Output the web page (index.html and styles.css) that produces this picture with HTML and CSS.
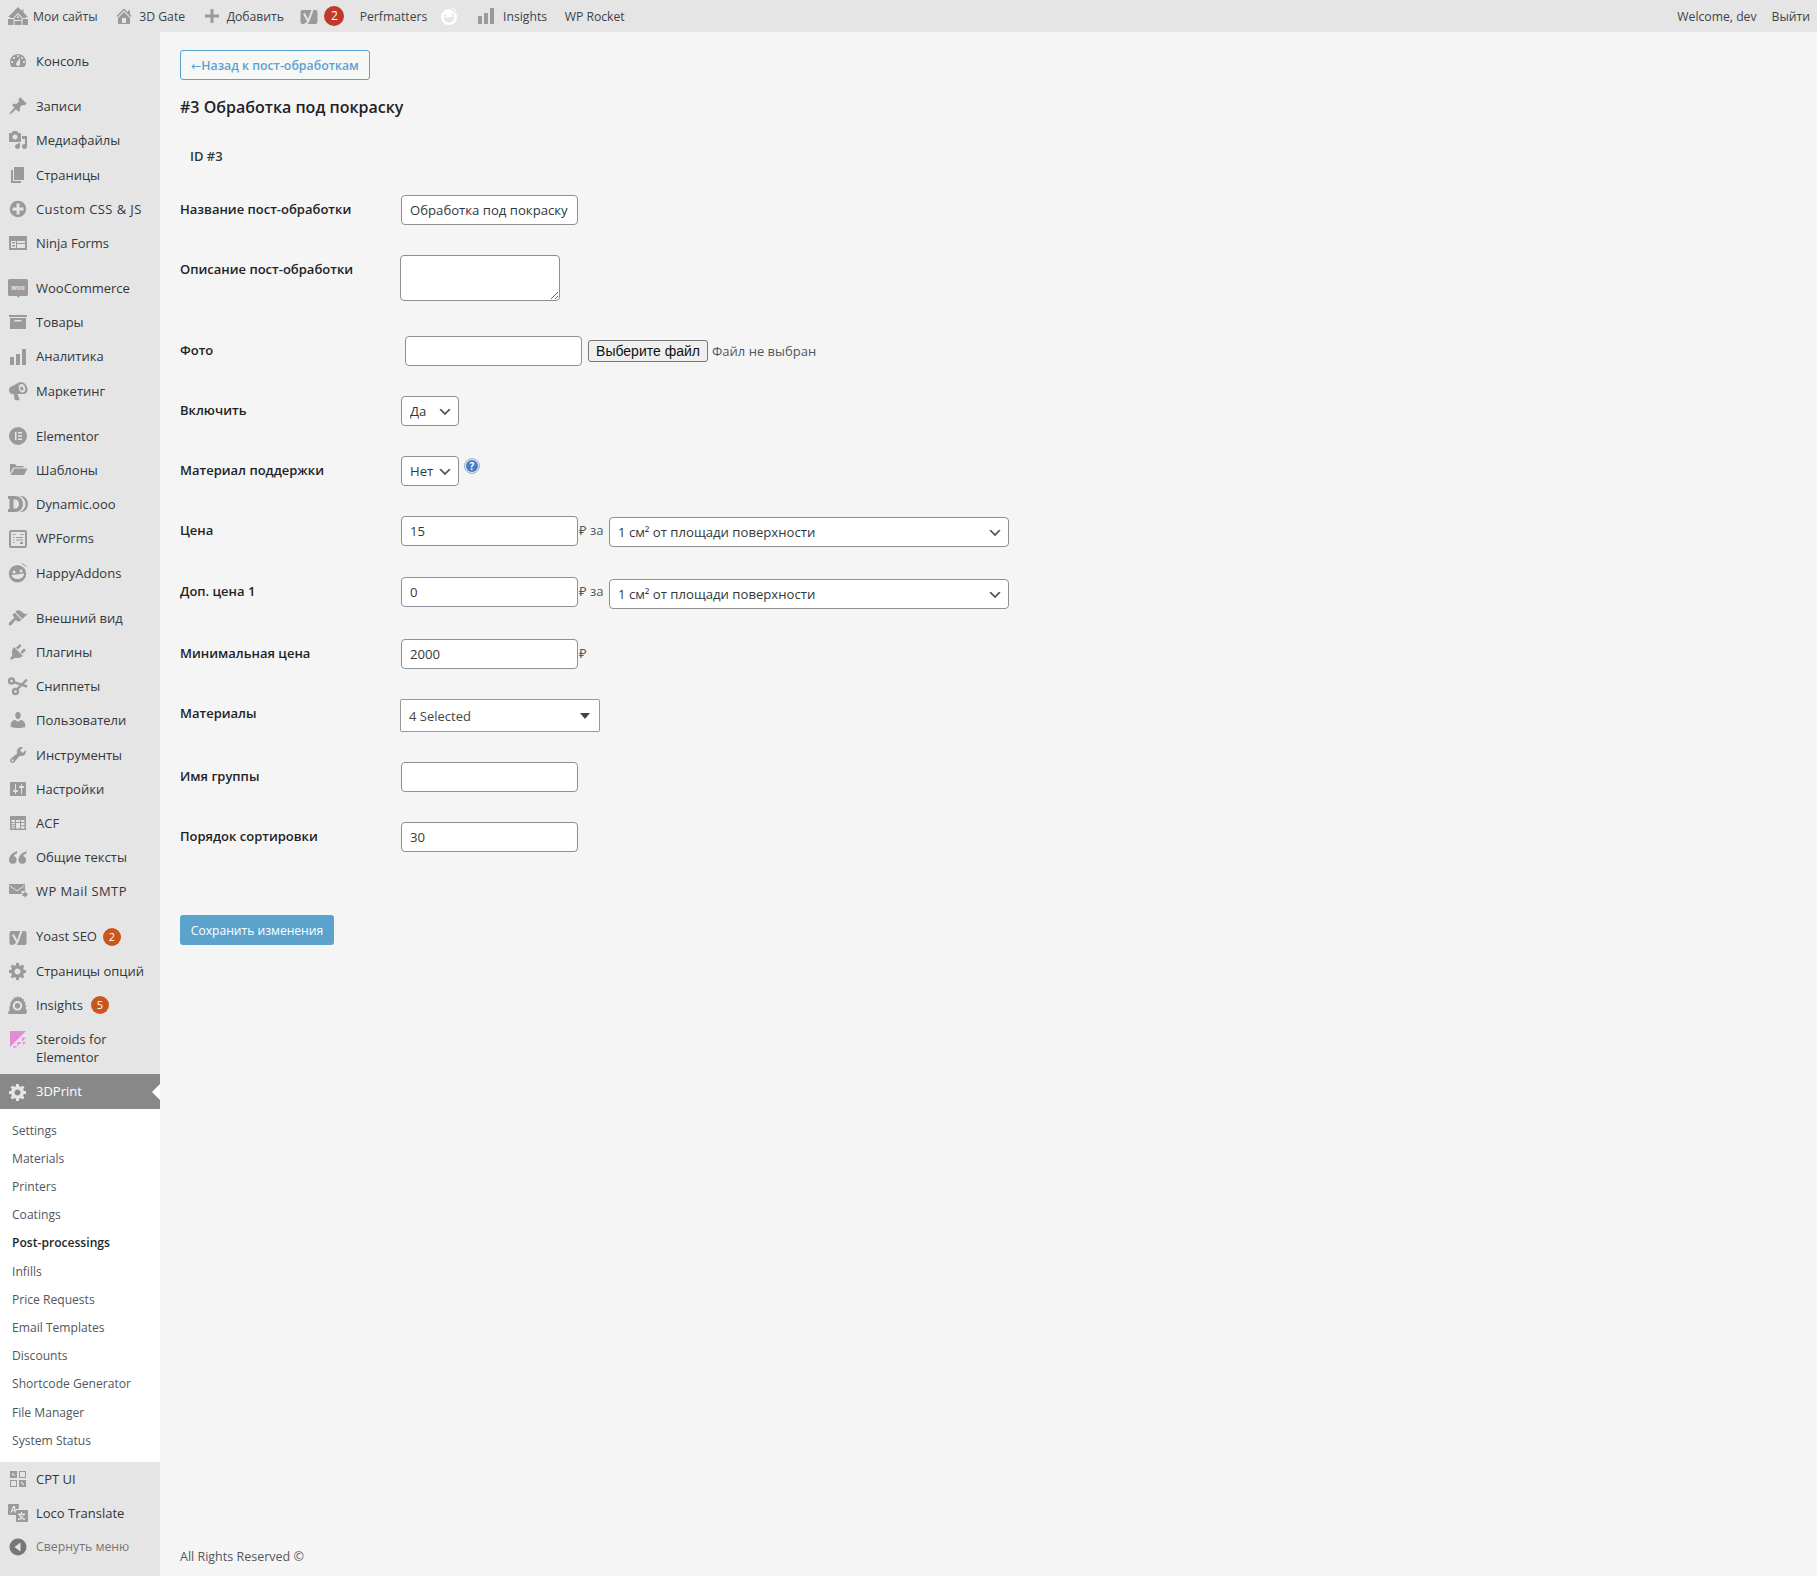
FILE: index.html
```html
<!DOCTYPE html>
<html lang="ru">
<head>
<meta charset="utf-8">
<title>3DPrint</title>
<link rel="stylesheet" href="styles.css">
</head>
<body>
<header class="adminbar">
  <nav class="bar-left">
    <a class="bar-item first"><svg class="bar-ico" viewBox="0 0 20 20"><path d="M10 1l4 4V3.500h1.500V6.500L20 11h-2v1h-3.500l-1-1H14L10 7l-4 4h.5l-1 1H2v-1H0zM10 8.500l3.500 3.500v2H6.500v-2zM9 10.500v1.500h2v-1.500zM5.500 13v6H0v-6zM20 13v6h-5.500v-6zM13.500 15v4h-7v-4z" fill-rule="evenodd"/></svg>Мои сайты</a>
    <a class="bar-item"><svg class="bar-ico" viewBox="0 0 20 20"><path d="M16 8.500l1.530 1.530-1.060 1.060L10 4.620l-6.470 6.470-1.060-1.060L10 2.500l4 4v-2h2v4zm-6-2.460l6 5.990V18H4v-5.970zM12 17v-5H8v5h4z" fill-rule="evenodd"/></svg>3D Gate</a>
    <a class="bar-item add"><svg class="bar-ico" viewBox="0 0 20 20"><path d="M17 8.500v3h-5.500V17h-3v-5.500H3v-3h5.500V3h3v5.500z"/></svg>Добавить</a>
    <a class="bar-item yoast"><svg class="bar-ico" viewBox="0 0 20 20"><path d="M3.500 4h13a2 2 0 0 1 2 2v10a2 2 0 0 1-2 2h-13a2 2 0 0 1-2-2V6a2 2 0 0 1 2-2z"/><path class="knock" d="M5 7.500l3.700 7M14.500 1L9.500 15c-.7 2-2 3-4 3.500"/></svg><span class="bar-badge">2</span></a>
    <a class="bar-item perf">Perfmatters</a>
    <a class="bar-item smile"><svg class="bar-ico white" viewBox="0 0 20 20"><path d="M10 3a8 8 0 1 0 8 8 7 7 0 0 0-.6-3L15 6a7 7 0 0 0-5-3zM6 8.500a1.300 1.300 0 1 1 0 2.600 1.300 1.300 0 0 1 0-2.600zm8-1a1.300 1.300 0 1 1 0 2.600 1.300 1.300 0 0 1 0-2.600zM4.500 12l11-1.500c0 3-2 6-5.500 6-3 0-5-2-5.500-4.500zM13 1l4 3.500-.7.700L12.500 2z" fill-rule="evenodd"/></svg></a>
    <a class="bar-item ins"><svg class="bar-ico" viewBox="0 0 20 20"><path d="M18 18V2h-4v16h4zm-6 0V7H8v11h4zm-6 0v-8H2v8h4z"/></svg>Insights</a>
    <a class="bar-item">WP Rocket</a>
  </nav>
  <nav class="bar-right">
    <a class="bar-link">Welcome, dev</a>
    <a class="bar-link">Выйти</a>
  </nav>
</header>

<div class="shell">
  <aside class="sidebar">
    <ul class="menu">
      <li class="mi"><svg class="ico" viewBox="0 0 20 20"><path fill-rule="evenodd" d="M3.760 16h12.480c1.100-1.370 1.760-3.110 1.760-5 0-4.420-3.580-8-8-8s-8 3.580-8 8c0 1.890.66 3.630 1.760 5zM10 4c.55 0 1 .45 1 1s-.45 1-1 1-1-.45-1-1 .45-1 1-1zM6 6c.55 0 1 .45 1 1s-.45 1-1 1-1-.45-1-1 .45-1 1-1zm8 0c.55 0 1 .45 1 1s-.45 1-1 1-1-.45-1-1 .45-1 1-1zm-5.370 5.550L12 7v6c0 1.100-.9 2-2 2s-2-.9-2-2c0-.57.24-1.080.63-1.450zM4 10c.55 0 1 .45 1 1s-.45 1-1 1-1-.45-1-1 .45-1 1-1zm12 0c.55 0 1 .45 1 1s-.45 1-1 1-1-.45-1-1 .45-1 1-1z"/></svg>Консоль</li>
      <li class="sep"></li>
      <li class="mi"><svg class="ico" viewBox="0 0 20 20"><path d="M10.440 3.020l1.820-1.820 6.360 6.350-1.830 1.820c-1.050-.68-2.480-.57-3.410.36l-.75.75c-.92.93-1.040 2.350-.35 3.410l-1.830 1.820-2.410-2.410-2.800 2.790c-.42.42-3.380 2.710-3.800 2.290s1.860-3.390 2.280-3.810l2.790-2.790L4.100 9.360l1.830-1.820c1.050.69 2.480.57 3.400-.36l.75-.75c.93-.92 1.050-2.350.36-3.410z"/></svg>Записи</li>
      <li class="mi"><svg class="ico" viewBox="0 0 20 20"><path fill-rule="evenodd" d="M13 11V4c0-.55-.45-1-1-1h-1.670L9 1H5L3.670 3H2c-.55 0-1 .45-1 1v7c0 .55.45 1 1 1h10c.55 0 1-.45 1-1zM7 4.500c1.380 0 2.500 1.120 2.500 2.500S8.380 9.500 7 9.500 4.500 8.380 4.500 7 5.620 4.500 7 4.500zM14 6h5v10.500c0 1.380-1.120 2.500-2.500 2.500S14 17.880 14 16.500s1.120-2.500 2.500-2.500c.17 0 .34.020.5.050V9h-3V6zm-4 8.050V13h2v3.500c0 1.380-1.120 2.500-2.500 2.500S7 17.880 7 16.500 8.120 14 9.500 14c.17 0 .34.020.5.050z"/></svg>Медиафайлы</li>
      <li class="mi"><svg class="ico" viewBox="0 0 20 20"><path d="M6 15V2h10v13H6zm-1 1h8v2H3V5h2v11z"/></svg>Страницы</li>
      <li class="mi"><svg class="ico" viewBox="0 0 20 20"><path fill-rule="evenodd" d="M15.800 4.200c3.200 3.210 3.200 8.390 0 11.600-3.210 3.200-8.390 3.200-11.600 0C1 12.590 1 7.410 4.200 4.200 7.410 1 12.590 1 15.800 4.200zm-4.300 11.300v-4h4v-3h-4v-4h-3v4h-4v3h4v4h3z"/></svg><span class="ls">Custom CSS &amp; JS</span></li>
      <li class="mi"><svg class="ico" viewBox="0 0 20 20"><path fill-rule="evenodd" d="M1 3h18v14H1zM3 8v7h5V8zm6 0v2h8V8zm0 3v4h8v-4zM4 9h3v1.500H4zm0 3h3v1.500H4z"/></svg>Ninja Forms</li>
      <li class="sep"></li>
      <li class="mi"><svg class="ico" viewBox="0 0 20 20"><path d="M1.500 1h17A1.500 1.500 0 0 1 20 2.500v14a1.500 1.500 0 0 1-1.500 1.500H12l-2 2-1-2H1.500A1.500 1.500 0 0 1 0 16.500v-14A1.500 1.500 0 0 1 1.500 1z"/><text class="woo-text" x="10" y="12" text-anchor="middle">woo</text></svg>WooCommerce</li>
      <li class="mi"><svg class="ico" viewBox="0 0 20 20"><path fill-rule="evenodd" d="M1 3h18v2H1zM2 6h16v11H2zM6.500 8v1.500h7V8z"/></svg>Товары</li>
      <li class="mi"><svg class="ico" viewBox="0 0 20 20"><path d="M18 18V2h-4v16h4zm-6 0V7H8v11h4zm-6 0v-8H2v8h4z"/></svg>Аналитика</li>
      <li class="mi"><svg class="ico" viewBox="0 0 20 20"><path fill-rule="evenodd" d="M13 1c3 0 6 3 6.500 6.500.4 3-1 5.500-4 5.500H9.500l2 5.500c0 .5-.3.700-.6.700H7.400c-.4 0-.7-.3-.8-.7L5.600 13H4.300C2.500 13 1 11 1 9c0-1.500.7-2.700 2-3.300L11 1.500c.6-.3 1.300-.5 2-.5zm.5 2c-2 0-3 1.800-2.700 4.300.3 2.500 2 4.200 3.700 4.200 2 0 3-1.800 2.700-4.300C17 4.800 15.300 3 13.500 3zm-.1 2.500c.9 0 1.800 1 2 2.100.2 1.100-.3 2-1.200 2s-1.800-1-2-2.100c-.2-1.100.3-2 1.200-2z"/></svg>Маркетинг</li>
      <li class="sep"></li>
      <li class="mi"><svg class="ico" viewBox="0 0 20 20"><path fill-rule="evenodd" d="M10 1a9 9 0 1 1 0 18 9 9 0 0 1 0-18zM7 6v8h1.500V6zm3 0v1.500h4V6zm0 3.200v1.500h4V9.200zm0 3.300V14h4v-1.500z"/></svg>Elementor</li>
      <li class="mi"><svg class="ico" viewBox="0 0 20 20"><path d="M2 4h5l1.500 2H15.500v1.500H5.500L2 13.500V4zM6.500 8.500H19.500L16 15H2.500z"/></svg>Шаблоны</li>
      <li class="mi"><svg class="ico" viewBox="0 0 20 20"><path fill-rule="evenodd" d="M0 2h7c5 0 8 3.500 8 8s-3 8-8 8H0V15h1.500V5H0zM5.500 5.500v9H7c2.800 0 4-2 4-4.500S9.800 5.500 7 5.500zM12 2h1c4 0 7 3.500 7 8s-3 8-7 8h-1c3.200-1.500 5.500-4.500 5.500-8S15.200 3.500 12 2z"/></svg>Dynamic.ooo</li>
      <li class="mi"><svg class="ico" viewBox="0 0 20 20"><path fill-rule="evenodd" d="M3 1h14a2 2 0 0 1 2 2v14a2 2 0 0 1-2 2H3a2 2 0 0 1-2-2V3a2 2 0 0 1 2-2zm0 2v14h14V3zM4.500 5h3v1h-3zm8 0h3v1h-3zM5 8h1.500v1H5zm3 0h7v1H8zM5 10.500h1.500v1H5zm3 0h7v1H8zM5 13h1.500v1H5zm7 0h3v2h-3z"/></svg>WPForms</li>
      <li class="mi"><svg class="ico" viewBox="0 0 20 20"><path fill-rule="evenodd" d="M9.500 2A8.700 8.700 0 1 1 9.500 19.500 8.700 8.700 0 0 1 9.500 2zM6 7.500a1.500 1.500 0 1 0 0 3 1.500 1.500 0 0 0 0-3zm7 -1a1.500 1.500 0 1 0 0 3 1.500 1.500 0 0 0 0-3zM3.500 12l12.500-1.500c0 3-2.500 5.500-6 5.500-3.500 0-6-1.500-6.500-4zM14 0l5 3.500-.4.6L13.500.7z"/></svg>HappyAddons</li>
      <li class="sep"></li>
      <li class="mi"><svg class="ico" viewBox="0 0 20 20"><path d="M14.480 11.060L7.410 3.990l1.500-1.500c.5-.56 2.300-.47 3.510.32 1.210.8 1.430 1.280 2.910 2.100 1.180.64 2.450 1.260 4.450.85zm-.71.71L6.700 4.700 4.930 6.470c-.39.39-.39 1.020 0 1.410l1.060 1.060c.39.39.39 1.030 0 1.420-.6.6-1.430 1.110-2.210 1.690-.35.26-.7.53-1.010.84C1.430 13.710.07 16.170 1.200 17.300c1.130 1.130 3.090-1.230 3.430-1.570.3-.3.57-.65.84-1 .58-.78 1.100-1.600 1.700-2.200.39-.39 1.020-.39 1.410 0l1.060 1.060c.39.39 1.020.39 1.410 0z"/></svg>Внешний вид</li>
      <li class="mi"><svg class="ico" viewBox="0 0 20 20"><path d="M13.110 4.360L9.870 7.600 8 5.730l3.240-3.240c.35-.34 1.050-.2 1.560.32.52.51.66 1.210.31 1.550zm-8 1.770l.91-1.120 9.010 9.010-1.190.84c-.71.71-2.630 1.160-3.820 1.160H6.140L4.900 17.260c-.59.59-1.540.59-2.120 0-.59-.58-.59-1.530 0-2.120l1.240-1.240v-3.880c0-1.130.4-3.190 1.090-3.890zm7.260 3.970l3.240-3.240c.34-.35 1.040-.21 1.550.31.52.51.66 1.210.31 1.550l-3.240 3.250z"/></svg>Плагины</li>
      <li class="mi"><svg class="ico" viewBox="0 0 20 20"><circle class="line" cx="3.500" cy="5" r="2.500"/><circle class="line" cx="7.500" cy="15.500" r="2.500"/><path class="line" d="M5.800 6.200L19 10.500M9 13.400L19 3.500"/></svg>Сниппеты</li>
      <li class="mi"><svg class="ico" viewBox="0 0 20 20"><path d="M10 9.250c-2.270 0-2.730-3.440-2.730-3.440C7 4.020 7.820 2 9.970 2c2.160 0 2.980 2.020 2.710 3.810 0 0-.41 3.440-2.680 3.440zm0 2.570L12.720 10c2.390 0 4.520 2.330 4.520 4.530v2.490s-3.650 1.130-7.240 1.130c-3.650 0-7.240-1.130-7.240-1.130v-2.490c0-2.250 1.940-4.480 4.470-4.480z"/></svg>Пользователи</li>
      <li class="mi"><svg class="ico" viewBox="0 0 20 20"><path fill-rule="evenodd" d="M16.680 9.770c-1.340 1.340-3.300 1.670-4.950.99l-5.410 6.520c-.99.99-2.590.99-3.580 0s-.99-2.590 0-3.570l6.520-5.420c-.68-1.650-.35-3.610.99-4.950 1.280-1.280 3.120-1.620 4.720-1.060l-2.890 2.890 2.820 2.820 2.860-2.870c.53 1.580.18 3.390-1.080 4.650zM3.810 16.210c.4.39 1.040.39 1.430 0 .4-.4.4-1.040 0-1.430-.39-.4-1.030-.4-1.430 0-.39.39-.39 1.030 0 1.430z"/></svg>Инструменты</li>
      <li class="mi"><svg class="ico" viewBox="0 0 20 20"><path fill-rule="evenodd" d="M18 16V4c0-.55-.45-1-1-1H3c-.55 0-1 .45-1 1v12c0 .55.45 1 1 1h14c.55 0 1-.45 1-1zM8 11h1c.55 0 1 .45 1 1s-.45 1-1 1H8v1.500c0 .28-.22.5-.5.5s-.5-.22-.5-.5V13H6c-.55 0-1-.45-1-1s.45-1 1-1h1V5.500c0-.28.22-.5.5-.5s.5.22.5.5V11zm5-2h-1c-.55 0-1-.45-1-1s.45-1 1-1h1V5.500c0-.28.22-.5.5-.5s.5.22.5.5V7h1c.55 0 1 .45 1 1s-.45 1-1 1h-1v5.500c0 .28-.22.5-.5.5s-.5-.22-.5-.5V9z"/></svg>Настройки</li>
      <li class="mi"><svg class="ico" viewBox="0 0 20 20"><path fill-rule="evenodd" d="M2 3h16v14H2zM3.500 7v2h3.500V7zm4.500 0v2h4V7zm5 0v2h3.500V7zM3.500 10v1.200h3.500V10zm0 2.200v1.200h3.500v-1.200zm0 2.200v1.200h3.500v-1.200zM8 10v5.600h4V10zm5 0v2.300h3.500V10zm0 3.300v2.300h3.500v-2.300z"/></svg>ACF</li>
      <li class="mi"><svg class="ico" viewBox="0 0 20 20"><path d="M9 4C5 5.500 1 8.500 1 13a3.800 3.800 0 1 0 4.700-3.700C6 8 7.500 6.800 9 6.500zM18.500 4c-4 1.500-8 4.500-8 9a3.800 3.800 0 1 0 4.700-3.700c.3-1.300 1.800-2.500 3.300-2.800z"/></svg>Общие тексты</li>
      <li class="mi"><svg class="ico" viewBox="0 0 20 20"><path d="M1 3h16v7h-3.500v3H1z"/><path class="knock thin" d="M1.500 4.500L9 10l7.500-5.500"/><path d="M14.500 12h2V10l3.500 3.500L16.500 17v-2h-2z"/></svg><span class="ls">WP Mail SMTP</span></li>
      <li class="sep"></li>
      <li class="mi"><svg class="ico" viewBox="0 0 20 20"><path d="M3.500 4h13a2 2 0 0 1 2 2v10a2 2 0 0 1-2 2h-13a2 2 0 0 1-2-2V6a2 2 0 0 1 2-2z"/><path class="knock" d="M5 7.500l3.700 7M14.500 1L9.500 15c-.7 2-2 3-4 3.500"/></svg>Yoast SEO<span class="count wide">2</span></li>
      <li class="mi"><svg class="ico" viewBox="0 0 20 20"><path fill-rule="evenodd" d="M18 12h-2.180c-.17.7-.44 1.350-.81 1.930l1.540 1.540-2.100 2.100-1.540-1.540c-.58.36-1.230.63-1.910.79V19H8v-2.180c-.68-.16-1.330-.43-1.910-.79l-1.540 1.540-2.120-2.120 1.540-1.540c-.36-.58-.63-1.230-.79-1.910H1V9.030h2.170c.16-.7.44-1.350.8-1.940L2.430 5.550l2.100-2.100 1.540 1.540c.58-.37 1.240-.64 1.930-.81V2h3v2.180c.68.16 1.330.43 1.910.79l1.540-1.540 2.120 2.120-1.540 1.540c.36.59.64 1.240.8 1.940H18V12zm-8.500 1.500c1.660 0 3-1.340 3-3s-1.340-3-3-3-3 1.340-3 3 1.340 3 3 3z"/></svg>Страницы опций</li>
      <li class="mi"><svg class="ico" viewBox="0 0 20 20"><path fill-rule="evenodd" d="M9.500 1l1.500 1.500 2-.5.800 1.800 2 .4v2l1.700 1.200-.5 1.800 1.500 2-1 1.300L19 16l-1 3H0l.7-3 1-1.500L1.300 12 2.500 10 2 8l1.700-1.200L3.500 5l2-.8.700-2 2 .5zM9.500 6a4.800 4.800 0 1 0 0 9.600 4.800 4.800 0 0 0 0-9.600zm0 2a2.800 2.800 0 1 1 0 5.600 2.800 2.800 0 0 1 0-5.600z"/></svg>Insights<span class="count">5</span></li>
      <li class="mi two"><svg class="ico" viewBox="0 0 20 20"><path class="pink" d="M2 2H18L2 18zM14 8.500h4l-4 4zM9.500 13h4l-4 4zM15 13h3l-3 3zM5.500 17h4l-4 2.500z"/></svg><span>Steroids for<br>Elementor</span></li>
      <li class="mi active"><svg class="ico" viewBox="0 0 20 20"><path fill-rule="evenodd" d="M18 12h-2.180c-.17.7-.44 1.350-.81 1.930l1.540 1.540-2.100 2.100-1.540-1.540c-.58.36-1.230.63-1.910.79V19H8v-2.180c-.68-.16-1.330-.43-1.910-.79l-1.540 1.540-2.120-2.120 1.540-1.540c-.36-.58-.63-1.230-.79-1.910H1V9.030h2.170c.16-.7.44-1.350.8-1.940L2.430 5.550l2.100-2.100 1.540 1.540c.58-.37 1.240-.64 1.930-.81V2h3v2.180c.68.16 1.330.43 1.910.79l1.540-1.540 2.120 2.120-1.540 1.540c.36.59.64 1.240.8 1.940H18V12zm-8.500 1.500c1.660 0 3-1.340 3-3s-1.340-3-3-3-3 1.340-3 3 1.340 3 3 3z"/></svg>3DPrint</li>
      <li class="submenu">
        <ul>
          <li>Settings</li>
          <li>Materials</li>
          <li>Printers</li>
          <li>Coatings</li>
          <li class="cur">Post-processings</li>
          <li>Infills</li>
          <li>Price Requests</li>
          <li>Email Templates</li>
          <li>Discounts</li>
          <li>Shortcode Generator</li>
          <li>File Manager</li>
          <li>System Status</li>
        </ul>
      </li>
      <li class="mi"><svg class="ico" viewBox="0 0 20 20"><path fill-rule="evenodd" d="M2 2h7v7H2zM11 2h7v7h-7zM12 3v5h5V3zM2 11h7v7H2zM3 12v5h5v-5zM11 11h7v7h-7zM4 4v1.500h1.500V4zM7 7V5.500H5.500V7zM4 7v-.5h1V7zM13 13v1.500h1.500V13zM16 16v-1.500h-1.500V16z"/></svg>CPT UI</li>
      <li class="mi"><svg class="ico" viewBox="0 0 20 20"><path fill-rule="evenodd" d="M1 1h10l-.5 5H8v6H1a1 1 0 0 1-1-1V2a1 1 0 0 1 1-1zm4 2L2.500 9.500H4l.5-1.500h1.800l.2 1.500H8L7 3zM5.700 4.500L6.200 7H4.800zM9 7h10a1 1 0 0 1 1 1v10a1 1 0 0 1-1 1H9a1 1 0 0 1-1-1V8a1 1 0 0 1 1-1zm5 2v1.500h-4V12h1c.4 1.200 1 2 1.700 2.700-.9.5-1.800.8-2.700 1v1.500c1.300-.2 2.500-.7 3.500-1.400 1 .7 2.200 1.200 3.500 1.400v-1.500c-.9-.2-1.800-.5-2.700-1 .7-.7 1.300-1.500 1.700-2.700h1v-1.500h-4V9zm1.300 3c-.3.7-.7 1.300-1.300 1.800-.6-.5-1-1.100-1.300-1.800z"/></svg>Loco Translate</li>
      <li class="mi collapse"><svg class="ico dark" viewBox="0 0 20 20"><path fill-rule="evenodd" d="M10 1.500a8.500 8.500 0 1 1 0 17 8.500 8.500 0 0 1 0-17zM12.500 5.500L6.500 10l6 4.500z"/></svg>Свернуть меню</li>
    </ul>
  </aside>

  <main class="content">
    <a class="back"><span class="arrow">←</span>Назад к пост-обработкам</a>
    <h2 class="title">#3 Обработка под покраску</h2>
    <p class="id">ID #3</p>
    <form class="form">
      <div class="row"><label class="lbl">Название пост-обработки</label><input class="text" type="text" value="Обработка под покраску"></div>
      <div class="row row-area"><label class="lbl">Описание пост-обработки</label><textarea class="area"></textarea></div>
      <div class="row"><label class="lbl">Фото</label><input class="text photo" type="text"><button class="file" type="button">Выберите файл</button><span class="nofile">Файл не выбран</span></div>
      <div class="row"><label class="lbl">Включить</label><select class="sel short"><option>Да</option></select></div>
      <div class="row"><label class="lbl">Материал поддержки</label><select class="sel short"><option>Нет</option></select><svg class="help" viewBox="0 0 16 16"><circle cx="8" cy="8" r="7.500" fill="#dfe8f3" stroke="#9db4d0"/><circle cx="8" cy="8" r="6" fill="#4a7cc4"/><text class="help-q" x="8" y="11.500" text-anchor="middle">?</text></svg></div>
      <div class="row"><label class="lbl">Цена</label><input class="text" type="text" value="15"><span class="unit">₽ за</span><select class="sel wide-sel"><option>1 см² от площади поверхности</option></select></div>
      <div class="row row-low"><label class="lbl">Доп. цена 1</label><input class="text" type="text" value="0"><span class="unit">₽ за</span><select class="sel wide-sel"><option>1 см² от площади поверхности</option></select></div>
      <div class="row"><label class="lbl">Минимальная цена</label><input class="text" type="text" value="2000"><span class="unit">₽</span></div>
      <div class="row"><label class="lbl">Материалы</label><div class="multi"><span class="multi-text">4 Selected</span><i class="caret"></i></div></div>
      <div class="row"><label class="lbl">Имя группы</label><input class="text" type="text"></div>
      <div class="row"><label class="lbl">Порядок сортировки</label><input class="text" type="text" value="30"></div>
      <button class="save" type="button">Сохранить изменения</button>
    </form>
    <footer class="foot">All Rights Reserved ©</footer>
  </main>
</div>
</body>
</html>
```
FILE: styles.css
```css
* { box-sizing: border-box; }
html, body { margin: 0; height: 100%; }
body {
  background: #f5f5f5;
  color: #32373c;
  font-family: "Open Sans", "Noto Sans", sans-serif;
  font-size: 13px;
  line-height: 18.2px;
  height: 1576px;
  overflow: hidden;
  display: flex;
  flex-direction: column;
}
ul { list-style: none; margin: 0; padding: 0; }

.adminbar {
  height: 32px;
  flex: none;
  background: #e5e5e5;
  display: flex;
  justify-content: space-between;
  align-items: center;
  color: #3c434a;
  font-size: 12.200px;
}
.bar-left, .bar-right { display: flex; align-items: center; height: 32px; padding-top: 2px; }
.bar-item { display: flex; align-items: center; padding: 0 8.300px; gap: 5px; }
.bar-item.first { padding-left: 8px; }
.bar-item.add { padding-right: 7px; }
.bar-item.yoast { padding-right: 7px; }
.bar-item.perf { padding-right: 3.400px; }
.bar-item.ins { padding-right: 9.300px; gap: 7.500px; }
.bar-ico { width: 20px; height: 20px; fill: #9a9a9a; flex: none; margin-top: -2px; }
.bar-ico.white { fill: #fff; }
.bar-badge {
  width: 20px; height: 20px; border-radius: 50%; margin-top: -2px;
  background: #c0392b; color: #fff; text-align: center; line-height: 20px; font-size: 12px;
}
.bar-right { gap: 15px; padding-right: 7px; }

.shell { flex: 1; display: flex; min-height: 0; }
.sidebar { width: 160px; flex: none; background: #e5e5e5; padding-top: 12px; }
.mi { display: flex; align-items: center; height: 34.2px; position: relative; color: #32373c; white-space: nowrap; }
.mi.two { height: 52.4px; align-items: flex-start; padding-top: 8px; }
.sep { height: 11px; }
.ls { letter-spacing: .42px; }
.ico { width: 20px; height: 20px; fill: #9a9a9a; margin: 0 8px; flex: none; }
.mi.two .ico { margin-top: -1px; }
.pink { fill: #e48bd6; }
.woo-text { fill: #e5e5e5; font-size: 6.500px; font-weight: 700; }
.ico.dark { fill: #777; }
.line { fill: none; stroke: #9a9a9a; stroke-width: 2.400; }
.knock { fill: none; stroke: #e5e5e5; stroke-width: 2; }
.knock.thin { stroke-width: 1; }
.count {
  width: 18px; height: 18px; border-radius: 50%;
  background: #c9561c; color: #fff; font-size: 11px; line-height: 18px; text-align: center;
  margin-left: 8px;
}
.count.wide { margin-left: 6px; }
.mi.active { background: #888; color: #fff; }
.mi.active .ico { fill: #e5e5e5; }
.mi.active::after {
  content: ""; position: absolute; right: 0; top: 50%; margin-top: -8px;
  border: 8px solid transparent; border-right-color: #fff; border-left-width: 0;
}
.submenu { background: #fff; padding: 7px 0 8px; color: #50575e; }
.submenu li { height: 28.2px; line-height: 28.2px; padding: 1px 0 0 12px; font-size: 12.100px; }
.submenu .cur { color: #23282d; font-weight: 600; }
.collapse { color: #777; font-size: 12.300px; }

.content { flex: 1; display: flex; flex-direction: column; padding: 18px 20px 10px; min-width: 0; align-items: flex-start; }
.back {
  height: 30px; width: 190px; padding-top: 2px; border: 1px solid #5ba3cf; border-radius: 3px; background: #f6f7f7;
  color: #5f9fd0; font-weight: 600; font-size: 12.300px; display: flex; align-items: center; justify-content: center; white-space: nowrap;
}
.arrow { font-family: "DejaVu Sans", sans-serif; font-weight: 400; font-size: 12px; }
.title { font-size: 16px; font-weight: 600; line-height: 22px; margin: 16px 0 0; color: #1d2327; }
.id { margin: 29px 0 0 10px; height: 18px; font-weight: 600; color: #32373c; }
.form { margin-top: 15px; width: 100%; }
.row { display: flex; align-items: flex-start; padding: 15px 0; }
.row-area { padding-bottom: 20px; }
.row-low .wide-sel { margin-top: 2px; }
.lbl { width: 220px; flex: none; font-weight: 600; line-height: 16.900px; margin-top: 5.500px; color: #1d2327; }
input.text, .area, .sel {
  font: inherit; font-size: 13.150px; color: #32373c; background-color: #fff;
  border: 1px solid #8c8f94; border-radius: 4px; margin: 0; outline: 0;
}
input.text { width: 177px; height: 30px; padding: 0 8px; margin-left: 1px; }
.area { width: 160px; height: 46px; padding: 2px 6px; display: block; }
input.photo { margin-left: 5px; }
.file {
  width: 120px; height: 22px; margin: 4px 0 0 6px; padding: 0;
  font-family: "Liberation Sans", Arial, sans-serif; font-size: 14px; line-height: 20px; color: #111;
  background: #efefef; border: 1px solid #767676; border-radius: 3px;
}
.nofile { margin: 6px 0 0 4px; color: #50575e; }
.sel {
  height: 30px; padding: 0 24px 0 8px;
  appearance: none; -webkit-appearance: none;
  background: #fff url("data:image/svg+xml;charset=utf-8,%3Csvg xmlns='http://www.w3.org/2000/svg' width='20' height='20'%3E%3Cpath d='M5 6l5 5 5-5 2 1-7 7-7-7z' fill='%23555'/%3E%3C/svg%3E") no-repeat right 5px top 55%;
  background-size: 16px 16px;
  margin-left: 1px;
}
.short { width: 58px; }
.wide-sel { width: 400px; margin-top: 1px; margin-left: 5px; }
.unit { margin: 5px 0 0 1px; width: 25px; color: #50575e; white-space: nowrap; }
.help { width: 16px; height: 16px; margin: 2px 0 0 5px; flex: none; }
.help-q { fill: #fff; font-size: 10px; font-weight: 700; }
.multi {
  width: 200px; height: 33px; background: #fff; border: 1px solid #999; border-radius: 2px;
  display: flex; align-items: center; justify-content: space-between; padding: 0 9px 0 8px; color: #444;
}
.multi-text { margin-top: 2px; }
.caret { width: 0; height: 0; border: 5.500px solid transparent; border-top: 6px solid #444; border-bottom: 0; }
.save {
  margin-top: 48px; width: 154px; height: 30px; border: 0; border-radius: 3px;
  background: #5ba3cd; color: #fff; font: inherit; font-size: 12.100px; padding: 2px 0 0;
}
.foot { margin-top: auto; color: #50575e; font-size: 12.500px; }
```
